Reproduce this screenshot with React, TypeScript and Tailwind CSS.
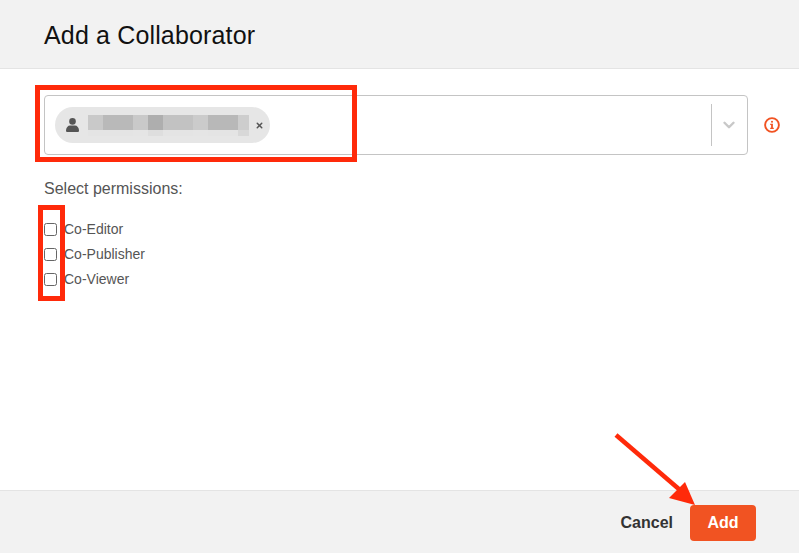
import { ChevronDown, X } from "lucide-react";

const blurBlocks = [
  { w: "w-[15px]", top: "bg-[#c9c9c9]", low: "bg-[#e4e4e4]" },
  { w: "w-[30px]", top: "bg-[#b9b9b9]", low: "bg-[#e4e4e4]" },
  { w: "w-[15px]", top: "bg-[#c9c9c9]", low: "bg-[#e5e5e5]" },
  { w: "w-[15px]", top: "bg-[#aeaeae]", low: "bg-[#dedede]" },
  { w: "w-[30px]", top: "bg-[#c2c2c2]", low: "bg-[#e4e4e4]" },
  { w: "w-[15px]", top: "bg-[#cbcbcb]", low: "bg-[#e5e5e5]" },
  { w: "w-[30px]", top: "bg-[#b8b8b8]", low: "bg-[#e4e4e4]" },
  { w: "w-[11px]", top: "bg-[#cdcdcd]", low: "bg-[#d8d8d8]" },
];

const permissions = ["Co-Editor", "Co-Publisher", "Co-Viewer"];

function PersonIcon() {
  return (
    <svg width="13" height="14" viewBox="0 0 13 14" fill="#555555">
      <circle cx="6.5" cy="3.4" r="3.3" />
      <path d="M0 12.4C0 9.4 2 7.4 4 7.4 L9 7.4C11 7.4 13 9.4 13 12.4 13 13.4 12.4 14 11.6 14 L1.4 14C.6 14 0 13.4 0 12.4Z" />
    </svg>
  );
}

function InfoCircle() {
  return (
    <svg width="16" height="16" viewBox="0 0 16 16" fill="none">
      <circle cx="8" cy="8" r="6.9" stroke="#f15322" strokeWidth="1.9" />
      <rect x="7.1" y="3.9" width="1.8" height="1.7" fill="#f15322" />
      <path d="M6.2 6.8H8.9V10.8H9.8V12H6.2V10.8H7.1V8H6.2Z" fill="#f15322" />
    </svg>
  );
}

export default function App() {
  return (
    <div className="relative flex h-[553px] w-[799px] flex-col overflow-hidden bg-white font-['Liberation_Sans',Arial,sans-serif]">

      {/* Header */}

      <div className="flex h-[69px] items-center border-b border-[#e4e4e4] bg-[#f2f2f2] pl-11 pt-[3px]">
        <h1 className="text-[25px] leading-none tracking-[0.15px] text-[#111111]">
          Add a Collaborator
        </h1>
      </div>

      {/* Body */}

      <div className="flex-1 pl-11 pt-[26px]">

        <div className="flex items-center">

          <div className="flex h-[60px] w-[704px] items-center rounded border border-[#c4c4c4] pl-[10px]">

            <div className="flex h-9 w-[215px] items-center rounded-full bg-[#e6e6e6] pl-[11px]">
              <PersonIcon />
              <div className="ml-[9px] flex pt-px">
                {blurBlocks.map((b, i) => (
                  <div key={i} className={b.w}>
                    <div className={`h-[15px] ${b.top}`} />
                    <div className={`h-[6px] ${b.low}`} />
                  </div>
                ))}
              </div>
              <X size={9} strokeWidth={4} className="ml-[6px] text-[#555555]" />
            </div>

            <div className="ml-auto flex h-full items-center">
              <div className="h-[42px] w-px bg-[#c4c4c4]" />
              <ChevronDown size={18} strokeWidth={3.2} className="ml-[8px] mr-[9px] text-[#c8c8c8]" />
            </div>

          </div>

          <div className="ml-[16px]">
            <InfoCircle />
          </div>

        </div>

        <p className="mt-[25px] text-[16px] leading-[18px] text-[#555555]">
          Select permissions:
        </p>

        <div className="mt-[22px] flex flex-col gap-[7px]">
          {permissions.map((p) => (
            <label key={p} className="flex h-[18px] items-center text-[14px] text-[#555555]">
              <span className="h-[13px] w-[13px] rounded-[2.5px] border border-[#666666] bg-white" />
              <span className="ml-[7px]">{p}</span>
            </label>
          ))}
        </div>

      </div>

      {/* Footer */}

      <div className="flex h-[63px] items-center justify-end border-t border-[#e4e4e4] bg-[#f2f2f2] pr-[43px] pt-[2px]">
        <span className="text-[16px] font-bold text-[#333333]">Cancel</span>
        <button className="ml-[17px] h-9 w-[66px] rounded bg-[#f15322] text-[16px] font-bold text-white">
          Add
        </button>
      </div>

      {/* Annotations */}

      <div className="absolute left-[35px] top-[85px] h-[77px] w-[322px] border-[5px] border-[#ff2a0a]" />
      <div className="absolute left-[38px] top-[205px] h-[96px] w-[27px] border-[5px] border-[#ff2a0a]" />

      <svg className="absolute left-[610px] top-[430px]" width="100" height="85" viewBox="0 0 100 85">
        <line x1="6" y1="5" x2="70" y2="60" stroke="#ff2a0a" strokeWidth="4.5" />
        <polygon points="85,75 75,52 59,68" fill="#ff2a0a" />
      </svg>

    </div>
  );
}
